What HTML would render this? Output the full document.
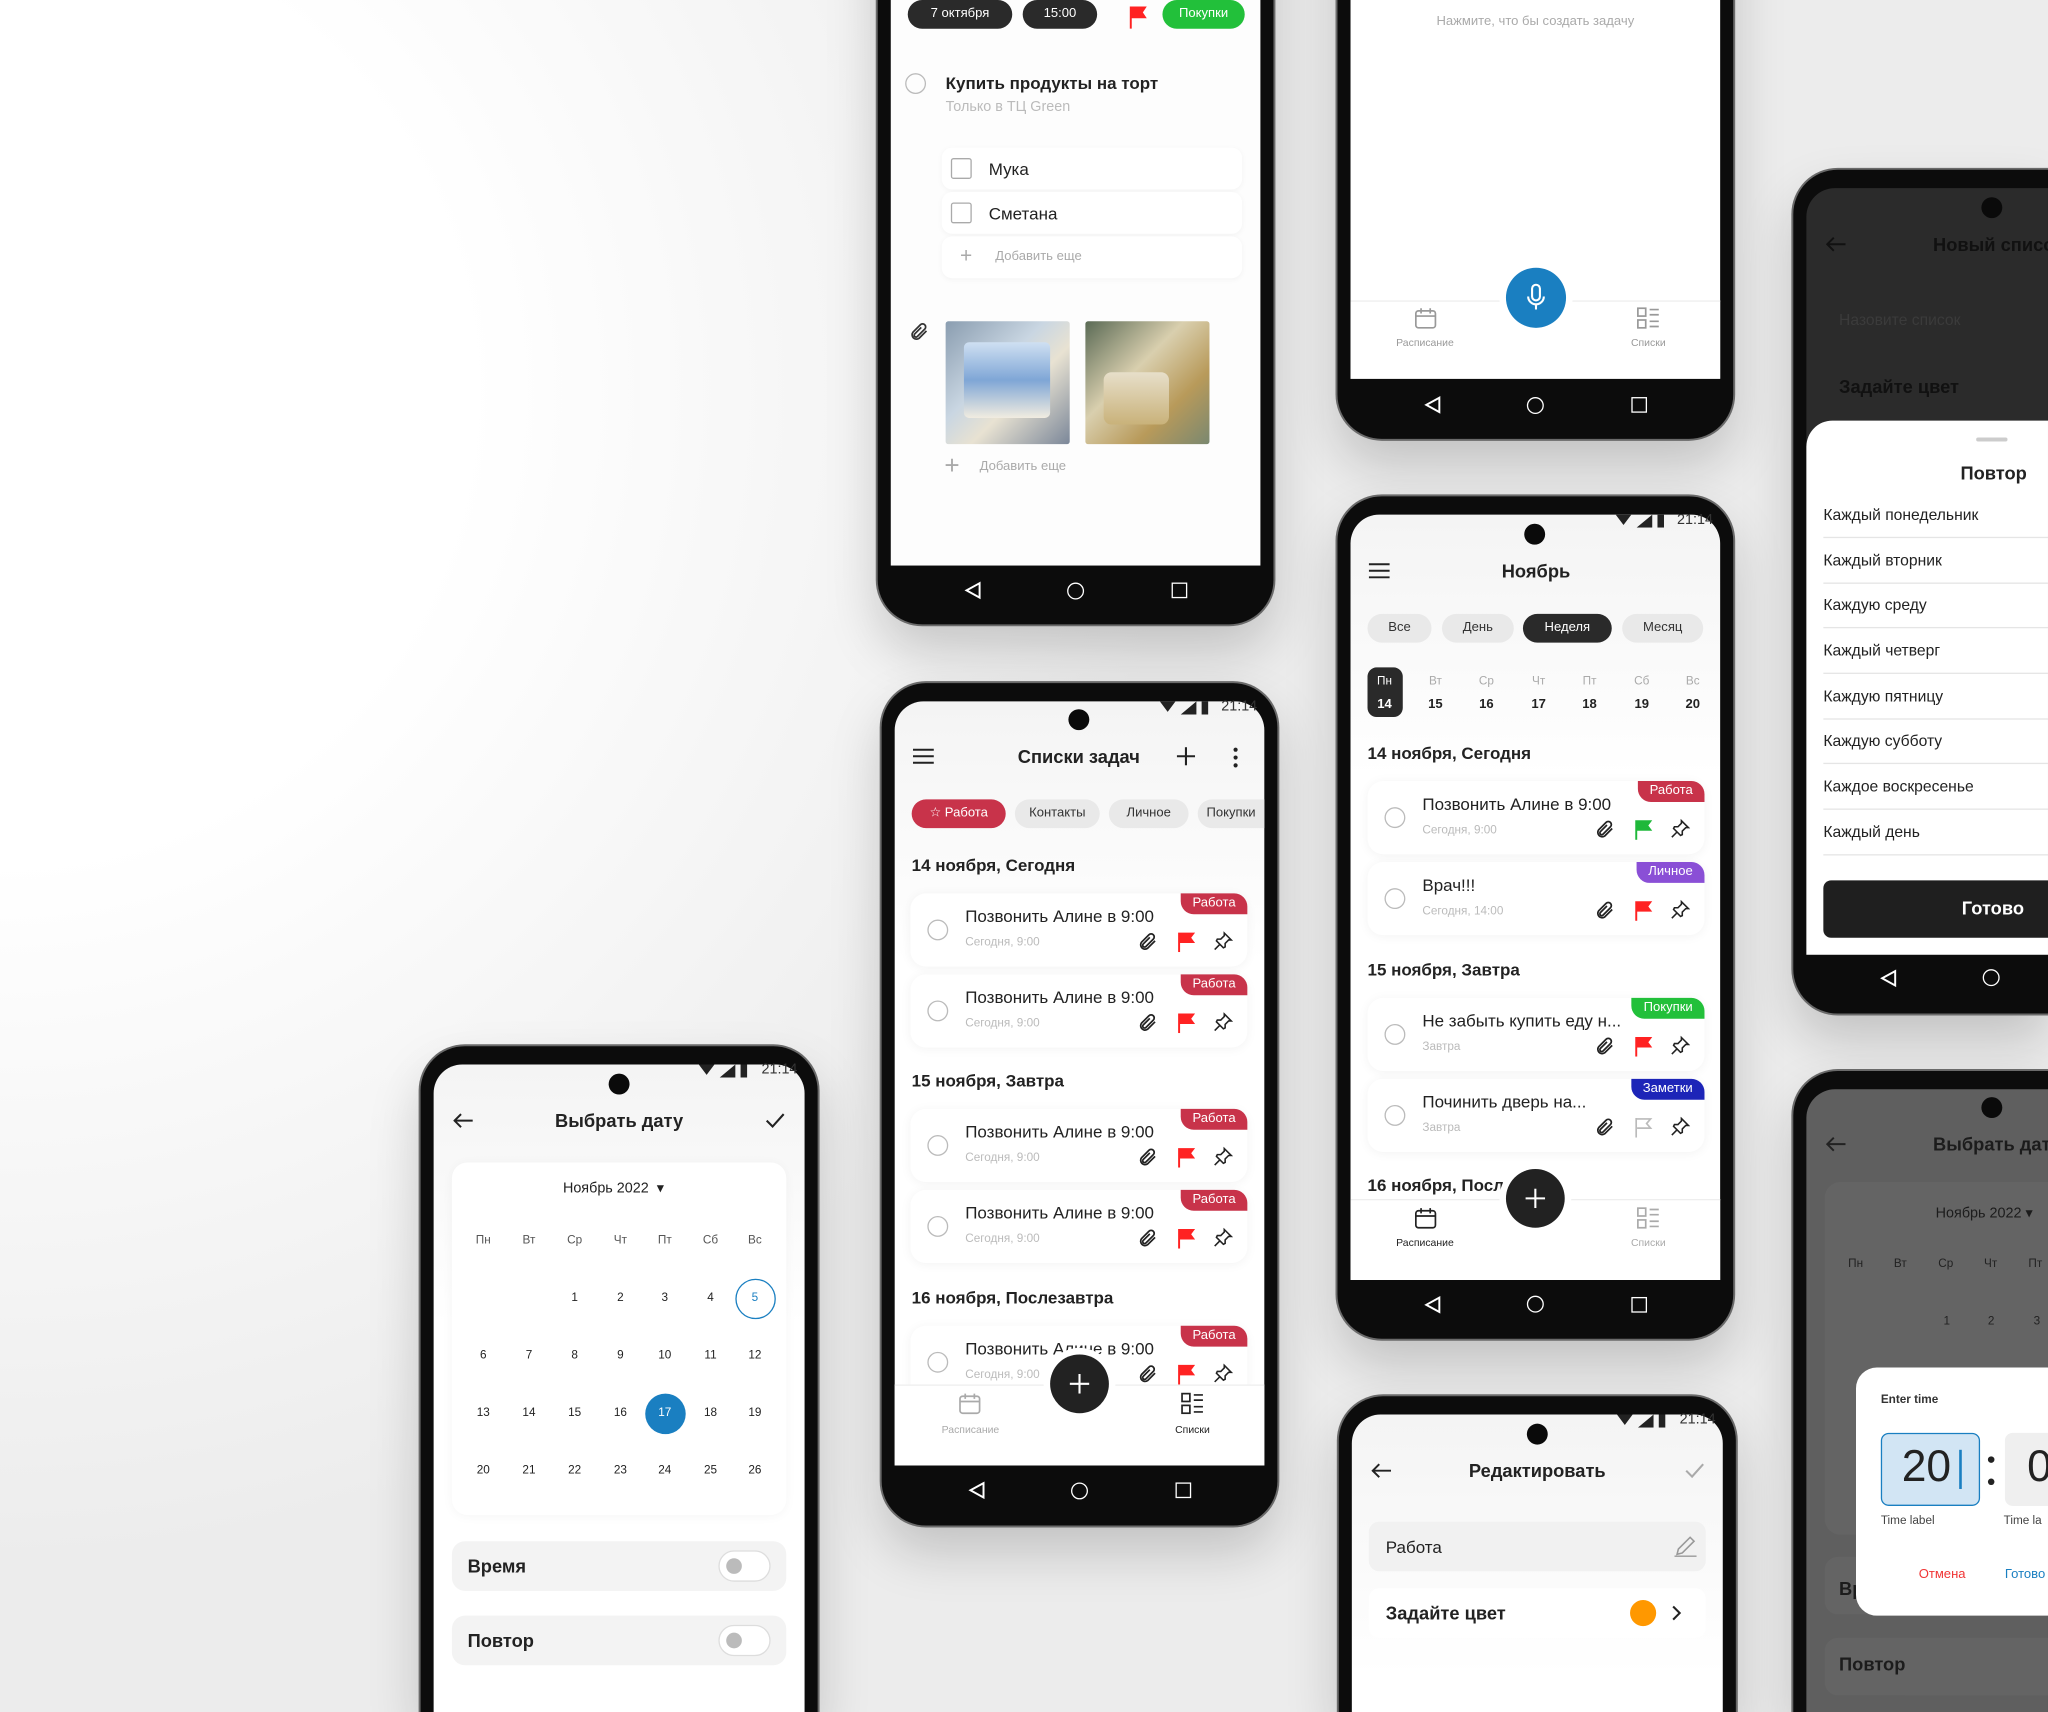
<!DOCTYPE html>
<html style="width:2048px;height:1712px;overflow:hidden"><head><meta charset="utf-8"><style>
*{margin:0;padding:0;box-sizing:border-box}
html,body{width:2048px;height:1712px;overflow:hidden}
body{position:relative;background:#eee;font-family:"Liberation Sans","DejaVu Sans",sans-serif;color:#222}
#w{position:absolute;left:0;top:0;width:1568px;height:1311px;transform:scale(1.30612);transform-origin:0 0;overflow:hidden;background:radial-gradient(ellipse 900px 900px at 0px 300px,#fff 0%,#fff 40%,#ececec 100%)}
#w div,#w span,#w b,#w i,#w svg{position:absolute}
#w span,#w b{white-space:nowrap}
.fr{background:#0c0c0c;border-radius:34px;box-shadow:0 0 0 1.5px #6a6a6a,0 20px 40px rgba(0,0,0,.18)}
.frb{border-radius:34px 34px 0 0}
.sc{background:linear-gradient(#f4f4f4,#fff 200px);border-radius:22px 22px 0 0;overflow:hidden}
.cam{width:16px;height:16px;border-radius:50%;background:#0a0a0a}
.st{font-size:11px;color:#333}
.card{width:258px;height:56px;background:#fff;border-radius:12px;box-shadow:0 1px 8px rgba(0,0,0,.05)}
.rad{left:13px;top:20px;width:16px;height:16px;border:1.3px solid #bbb;border-radius:50%}
.ct{left:42px;top:10px;font-size:13px;font-weight:normal;color:#222}
.cs{left:42px;top:32px;font-size:9px;color:#bbb}
.tag{right:0;top:0;height:16px;padding:0 9px;line-height:16px;font-size:10px;color:#fff;border-radius:0 10px 0 10px}
.ic{top:29px;width:16px;height:16px}
.h{font-size:14px;font-weight:bold;color:#222}
.chip{height:22px;line-height:22px;border-radius:11px;font-size:10px;text-align:center;white-space:nowrap}
.g{background:#e9e9e9;color:#333}
.d{background:#2a2a2a;color:#fff}
.c{text-align:center}
</style></head><body><div id="w">

<!-- Phone 1 top-center -->
<div class="fr" style="left:672px;top:-200px;width:303px;height:678px"></div>
<div class="sc" style="left:682px;top:-190px;width:283px;height:623px;border-radius:0;background:#fdfdfd"></div>
<div class="chip d" style="left:695px;top:0;width:80px">7 октября</div>
<div class="chip d" style="left:783px;top:0;width:57px">15:00</div>
<svg style="left:863px;top:4px" width="16" height="18" viewBox="0 0 16 18"><path d="M2 1h13l-3 4.5 3 4.5H3.5v8H2z" fill="#f22"/></svg>
<div class="chip" style="left:890px;top:0;width:63px;background:#22c03a;color:#fff">Покупки</div>
<div class="rad" style="left:693px;top:56px"></div>
<b class="h" style="left:724px;top:56px;font-size:13px">Купить продукты на торт</b>
<span style="left:724px;top:76px;font-size:11px;color:#bbb">Только в ТЦ Green</span>
<div style="left:721px;top:113px;width:230px;height:32px;background:#fff;border-radius:8px;box-shadow:0 1px 4px rgba(0,0,0,.04)"></div>
<div style="left:721px;top:147px;width:230px;height:32px;background:#fff;border-radius:8px;box-shadow:0 1px 4px rgba(0,0,0,.04)"></div>
<div style="left:721px;top:181px;width:230px;height:32px;background:#fff;border-radius:8px;box-shadow:0 1px 4px rgba(0,0,0,.04)"></div>
<div style="left:728px;top:121px;width:16px;height:16px;border:1.5px solid #aaa;border-radius:2px"></div>
<span style="left:757px;top:122px;font-size:13px">Мука</span>
<div style="left:728px;top:155px;width:16px;height:16px;border:1.5px solid #aaa;border-radius:2px"></div>
<span style="left:757px;top:156px;font-size:13px">Сметана</span>
<span style="left:735px;top:188px;font-size:16px;color:#aaa">+</span>
<span style="left:762px;top:191px;font-size:10px;color:#aaa">Добавить еще</span>
<svg style="left:696px;top:246px" width="16" height="16" viewBox="0 0 24 24"><path d="M20 11l-8.5 8.5a5 5 0 01-7-7L13 4a3.5 3.5 0 015 5l-8.5 8.5a2 2 0 01-3-3L14 7" fill="none" stroke="#333" stroke-width="2"/></svg>
<div style="left:724px;top:246px;width:95px;height:94px;background:linear-gradient(135deg,#8a9db0,#c9d6e2 40%,#e8e2d2 60%,#7b8799);border-radius:2px"></div>
<div style="left:738px;top:262px;width:66px;height:58px;background:linear-gradient(#cfe0f2,#7fa6d6 50%,#f1ece0);border-radius:4px"></div>
<div style="left:831px;top:246px;width:95px;height:94px;background:linear-gradient(135deg,#5a6a55,#d9cfae 40%,#b89a5a 70%,#7a8870);border-radius:2px"></div>
<div style="left:845px;top:285px;width:50px;height:40px;background:linear-gradient(#e7dfca,#c9b27a);border-radius:6px"></div>
<span style="left:723px;top:346px;font-size:20px;color:#aaa;font-weight:lighter">+</span>
<span style="left:750px;top:352px;font-size:10px;color:#aaa">Добавить еще</span>
<svg style="left:738px;top:445px" width="14" height="14" viewBox="0 0 14 14"><path d="M12 1.5L2 7l10 5.5z" fill="none" stroke="#fff" stroke-width="1.5"/></svg>
<div style="left:817px;top:446px;width:13px;height:13px;border:1.5px solid #fff;border-radius:50%"></div>
<div style="left:897px;top:446px;width:12px;height:12px;border:1.5px solid #fff"></div>

<!-- Phone 2 top-right-center -->
<div class="fr" style="left:1024px;top:-300px;width:303px;height:636px"></div>
<div class="sc" style="left:1034px;top:-290px;width:283px;height:580px;border-radius:0;background:#fff"></div>
<span class="c" style="left:1034px;top:11px;width:283px;font-size:10px;color:#aaa">Нажмите, что бы создать задачу</span>
<div style="left:1034px;top:230px;width:283px;height:60px;background:#fff;border-top:1px solid #eee"></div>
<div style="left:1153px;top:205px;width:46px;height:46px;border-radius:50%;background:#1a7fc1;box-shadow:0 0 0 5px #fff"></div>
<svg style="left:1166px;top:217px" width="20" height="22" viewBox="0 0 20 22"><rect x="7" y="1" width="6" height="12" rx="3" fill="none" stroke="#fff" stroke-width="1.6"/><path d="M4 10a6 6 0 0012 0M10 16v4" fill="none" stroke="#fff" stroke-width="1.6"/></svg>
<svg style="left:1083px;top:235px" width="17" height="17" viewBox="0 0 17 17"><rect x="1" y="3" width="15" height="13" rx="2" fill="none" stroke="#999" stroke-width="1.3"/><path d="M1 7h15M5 1v4M12 1v4" stroke="#999" stroke-width="1.3"/></svg>
<span class="c" style="left:1061px;top:258px;width:60px;font-size:8px;color:#999">Расписание</span>
<svg style="left:1253px;top:235px" width="18" height="17" viewBox="0 0 18 17"><rect x="1" y="1" width="6" height="6" fill="none" stroke="#999" stroke-width="1.3"/><rect x="1" y="10" width="6" height="6" fill="none" stroke="#999" stroke-width="1.3"/><path d="M10 2h7M10 6h7M10 11h7M10 15h7" stroke="#999" stroke-width="1.3"/></svg>
<span class="c" style="left:1232px;top:258px;width:60px;font-size:8px;color:#999">Списки</span>
<svg style="left:1090px;top:303px" width="14" height="14" viewBox="0 0 14 14"><path d="M12 1.5L2 7l10 5.5z" fill="none" stroke="#fff" stroke-width="1.5"/></svg>
<div style="left:1169px;top:304px;width:13px;height:13px;border:1.5px solid #fff;border-radius:50%"></div>
<div style="left:1249px;top:304px;width:12px;height:12px;border:1.5px solid #fff"></div>

<!-- Phone 3 middle center -->
<div class="fr" style="left:675px;top:523px;width:303px;height:645px"></div>
<div class="sc" style="left:685px;top:537px;width:283px;height:585px"></div>
<div class="cam" style="left:818px;top:543px"></div>
<span class="st" style="left:935px;top:535px">21:14</span>
<svg style="left:888px;top:537px" width="44" height="10" viewBox="0 0 44 10"><path d="M0 0h12l-6 8z M16 10l12-10v10z M32 0h5v10h-5z" fill="#222"/></svg>
<svg style="left:699px;top:573px" width="16" height="12" viewBox="0 0 16 12"><path d="M0 1h16M0 6h16M0 11h16" stroke="#222" stroke-width="1.5"/></svg>
<b class="h c" style="left:756px;top:571px;width:140px">Списки задач</b>
<svg style="left:901px;top:572px" width="14" height="14" viewBox="0 0 14 14"><path d="M7 0v14M0 7h14" stroke="#222" stroke-width="1.6"/></svg>
<svg style="left:944px;top:572px" width="4" height="16" viewBox="0 0 4 16"><circle cx="2" cy="2" r="1.6" fill="#222"/><circle cx="2" cy="8" r="1.6" fill="#222"/><circle cx="2" cy="14" r="1.6" fill="#222"/></svg>
<div class="chip" style="left:698px;top:612px;width:72px;background:#c8334a;color:#fff">&#x2606; Работа</div>
<div class="chip g" style="left:777px;top:612px;width:65px">Контакты</div>
<div class="chip g" style="left:849px;top:612px;width:61px">Личное</div>
<div class="chip g" style="left:917px;top:612px;width:51px;border-radius:11px 0 0 11px;overflow:hidden">Покупки</div>
<b class="h" style="left:698px;top:655px;font-size:13px">14 ноября, Сегодня</b>
<b class="h" style="left:698px;top:820px;font-size:13px">15 ноября, Завтра</b>
<b class="h" style="left:698px;top:986px;font-size:13px">16 ноября, Послезавтра</b>

<div class="card" style="left:697px;top:684px"><i class="rad"></i><span class="ct">Позвонить Алине в 9:00</span><span class="cs">Сегодня, 9:00</span><span class="tag" style="background:#c8334a">Работа</span>
<svg class="ic" style="left:174px" viewBox="0 0 24 24"><path d="M20 11l-8.5 8.5a5 5 0 01-7-7L13 4a3.5 3.5 0 015 5l-8.5 8.5a2 2 0 01-3-3L14 7" fill="none" stroke="#222" stroke-width="2"/></svg>
<svg class="ic" style="left:203px" viewBox="0 0 16 16"><path d="M2 1h13l-3 4 3 4H3.5v7H2z" fill="#f22"/></svg>
<svg class="ic" style="left:231px" viewBox="0 0 24 24"><path d="M14 2l8 8-3 0-4 4 0 4-2 1-8-8 1-2 4 0 4-4z M9 15l-6 6" fill="none" stroke="#222" stroke-width="1.8"/></svg></div>
<div class="card" style="left:697px;top:746px"><i class="rad"></i><span class="ct">Позвонить Алине в 9:00</span><span class="cs">Сегодня, 9:00</span><span class="tag" style="background:#c8334a">Работа</span>
<svg class="ic" style="left:174px" viewBox="0 0 24 24"><path d="M20 11l-8.5 8.5a5 5 0 01-7-7L13 4a3.5 3.5 0 015 5l-8.5 8.5a2 2 0 01-3-3L14 7" fill="none" stroke="#222" stroke-width="2"/></svg>
<svg class="ic" style="left:203px" viewBox="0 0 16 16"><path d="M2 1h13l-3 4 3 4H3.5v7H2z" fill="#f22"/></svg>
<svg class="ic" style="left:231px" viewBox="0 0 24 24"><path d="M14 2l8 8-3 0-4 4 0 4-2 1-8-8 1-2 4 0 4-4z M9 15l-6 6" fill="none" stroke="#222" stroke-width="1.8"/></svg></div>
<div class="card" style="left:697px;top:849px"><i class="rad"></i><span class="ct">Позвонить Алине в 9:00</span><span class="cs">Сегодня, 9:00</span><span class="tag" style="background:#c8334a">Работа</span>
<svg class="ic" style="left:174px" viewBox="0 0 24 24"><path d="M20 11l-8.5 8.5a5 5 0 01-7-7L13 4a3.5 3.5 0 015 5l-8.5 8.5a2 2 0 01-3-3L14 7" fill="none" stroke="#222" stroke-width="2"/></svg>
<svg class="ic" style="left:203px" viewBox="0 0 16 16"><path d="M2 1h13l-3 4 3 4H3.5v7H2z" fill="#f22"/></svg>
<svg class="ic" style="left:231px" viewBox="0 0 24 24"><path d="M14 2l8 8-3 0-4 4 0 4-2 1-8-8 1-2 4 0 4-4z M9 15l-6 6" fill="none" stroke="#222" stroke-width="1.8"/></svg></div>
<div class="card" style="left:697px;top:911px"><i class="rad"></i><span class="ct">Позвонить Алине в 9:00</span><span class="cs">Сегодня, 9:00</span><span class="tag" style="background:#c8334a">Работа</span>
<svg class="ic" style="left:174px" viewBox="0 0 24 24"><path d="M20 11l-8.5 8.5a5 5 0 01-7-7L13 4a3.5 3.5 0 015 5l-8.5 8.5a2 2 0 01-3-3L14 7" fill="none" stroke="#222" stroke-width="2"/></svg>
<svg class="ic" style="left:203px" viewBox="0 0 16 16"><path d="M2 1h13l-3 4 3 4H3.5v7H2z" fill="#f22"/></svg>
<svg class="ic" style="left:231px" viewBox="0 0 24 24"><path d="M14 2l8 8-3 0-4 4 0 4-2 1-8-8 1-2 4 0 4-4z M9 15l-6 6" fill="none" stroke="#222" stroke-width="1.8"/></svg></div>
<div class="card" style="left:697px;top:1015px"><i class="rad"></i><span class="ct">Позвонить Алине в 9:00</span><span class="cs">Сегодня, 9:00</span><span class="tag" style="background:#c8334a">Работа</span>
<svg class="ic" style="left:174px" viewBox="0 0 24 24"><path d="M20 11l-8.5 8.5a5 5 0 01-7-7L13 4a3.5 3.5 0 015 5l-8.5 8.5a2 2 0 01-3-3L14 7" fill="none" stroke="#222" stroke-width="2"/></svg>
<svg class="ic" style="left:203px" viewBox="0 0 16 16"><path d="M2 1h13l-3 4 3 4H3.5v7H2z" fill="#f22"/></svg>
<svg class="ic" style="left:231px" viewBox="0 0 24 24"><path d="M14 2l8 8-3 0-4 4 0 4-2 1-8-8 1-2 4 0 4-4z M9 15l-6 6" fill="none" stroke="#222" stroke-width="1.8"/></svg></div>
<div style="left:685px;top:1060px;width:283px;height:62px;background:#fff;border-top:1px solid #eee"></div>
<div style="left:804px;top:1037px;width:45px;height:45px;border-radius:50%;background:#222;box-shadow:0 0 0 5px #fff"></div>
<svg style="left:819px;top:1052px" width="15" height="15" viewBox="0 0 15 15"><path d="M7.5 0v15M0 7.5h15" stroke="#fff" stroke-width="1.6"/></svg>
<svg style="left:734px;top:1066px" width="17" height="17" viewBox="0 0 17 17"><rect x="1" y="3" width="15" height="13" rx="2" fill="none" stroke="#aaa" stroke-width="1.3"/><path d="M1 7h15M5 1v4M12 1v4" stroke="#aaa" stroke-width="1.3"/></svg>
<span class="c" style="left:713px;top:1090px;width:60px;font-size:8px;color:#aaa">Расписание</span>
<svg style="left:904px;top:1066px" width="18" height="17" viewBox="0 0 18 17"><rect x="1" y="1" width="6" height="6" fill="none" stroke="#222" stroke-width="1.3"/><rect x="1" y="10" width="6" height="6" fill="none" stroke="#222" stroke-width="1.3"/><path d="M10 2h7M10 6h7M10 11h7M10 15h7" stroke="#222" stroke-width="1.3"/></svg>
<span class="c" style="left:883px;top:1090px;width:60px;font-size:8px;color:#222">Списки</span>
<svg style="left:741px;top:1134px" width="14" height="14" viewBox="0 0 14 14"><path d="M12 1.5L2 7l10 5.5z" fill="none" stroke="#fff" stroke-width="1.5"/></svg>
<div style="left:820px;top:1135px;width:13px;height:13px;border:1.5px solid #fff;border-radius:50%"></div>
<div style="left:900px;top:1135px;width:12px;height:12px;border:1.5px solid #fff"></div>

<!-- Phone 4 right center -->
<div class="fr" style="left:1024px;top:380px;width:303px;height:645px"></div>
<div class="sc" style="left:1034px;top:394px;width:283px;height:586px"></div>
<div class="cam" style="left:1167px;top:401px"></div>
<span class="st" style="left:1284px;top:392px">21:14</span>
<svg style="left:1237px;top:394px" width="44" height="10" viewBox="0 0 44 10"><path d="M0 0h12l-6 8z M16 10l12-10v10z M32 0h5v10h-5z" fill="#222"/></svg>
<svg style="left:1048px;top:431px" width="16" height="12" viewBox="0 0 16 12"><path d="M0 1h16M0 6h16M0 11h16" stroke="#222" stroke-width="1.5"/></svg>
<b class="h c" style="left:1106px;top:429px;width:140px">Ноябрь</b>
<div class="chip g" style="left:1047px;top:470px;width:49px">Все</div>
<div class="chip g" style="left:1104px;top:470px;width:55px">День</div>
<div class="chip d" style="left:1166px;top:470px;width:68px">Неделя</div>
<div class="chip g" style="left:1242px;top:470px;width:62px">Месяц</div>
<div style="left:1047px;top:511px;width:27px;height:38px;background:#2a2a2a;border-radius:7px"></div>
<span class="c" style="left:1045px;top:516px;width:30px;font-size:9px;color:#fff">Пн</span><b class="c" style="left:1045px;top:534px;width:30px;font-size:10px;color:#fff">14</b>
<span class="c" style="left:1084px;top:516px;width:30px;font-size:9px;color:#aaa">Вт</span><b class="c" style="left:1084px;top:534px;width:30px;font-size:10px">15</b>
<span class="c" style="left:1123px;top:516px;width:30px;font-size:9px;color:#aaa">Ср</span><b class="c" style="left:1123px;top:534px;width:30px;font-size:10px">16</b>
<span class="c" style="left:1163px;top:516px;width:30px;font-size:9px;color:#aaa">Чт</span><b class="c" style="left:1163px;top:534px;width:30px;font-size:10px">17</b>
<span class="c" style="left:1202px;top:516px;width:30px;font-size:9px;color:#aaa">Пт</span><b class="c" style="left:1202px;top:534px;width:30px;font-size:10px">18</b>
<span class="c" style="left:1242px;top:516px;width:30px;font-size:9px;color:#aaa">Сб</span><b class="c" style="left:1242px;top:534px;width:30px;font-size:10px">19</b>
<span class="c" style="left:1281px;top:516px;width:30px;font-size:9px;color:#aaa">Вс</span><b class="c" style="left:1281px;top:534px;width:30px;font-size:10px">20</b>
<b class="h" style="left:1047px;top:569px;font-size:13px">14 ноября, Сегодня</b>
<b class="h" style="left:1047px;top:735px;font-size:13px">15 ноября, Завтра</b>
<b class="h" style="left:1047px;top:900px;font-size:13px">16 ноября, Послезавтра</b>
<div class="card" style="left:1047px;top:598px"><i class="rad"></i><span class="ct">Позвонить Алине в 9:00</span><span class="cs">Сегодня, 9:00</span><span class="tag" style="background:#c8334a">Работа</span>
<svg class="ic" style="left:174px" viewBox="0 0 24 24"><path d="M20 11l-8.5 8.5a5 5 0 01-7-7L13 4a3.5 3.5 0 015 5l-8.5 8.5a2 2 0 01-3-3L14 7" fill="none" stroke="#222" stroke-width="2"/></svg>
<svg class="ic" style="left:203px" viewBox="0 0 16 16"><path d="M2 1h13l-3 4 3 4H3.5v7H2z" fill="#1fb83a"/></svg>
<svg class="ic" style="left:231px" viewBox="0 0 24 24"><path d="M14 2l8 8-3 0-4 4 0 4-2 1-8-8 1-2 4 0 4-4z M9 15l-6 6" fill="none" stroke="#222" stroke-width="1.8"/></svg></div>
<div class="card" style="left:1047px;top:660px"><i class="rad"></i><span class="ct">Врач!!!</span><span class="cs">Сегодня, 14:00</span><span class="tag" style="background:#8a4fd6">Личное</span>
<svg class="ic" style="left:174px" viewBox="0 0 24 24"><path d="M20 11l-8.5 8.5a5 5 0 01-7-7L13 4a3.5 3.5 0 015 5l-8.5 8.5a2 2 0 01-3-3L14 7" fill="none" stroke="#222" stroke-width="2"/></svg>
<svg class="ic" style="left:203px" viewBox="0 0 16 16"><path d="M2 1h13l-3 4 3 4H3.5v7H2z" fill="#f22"/></svg>
<svg class="ic" style="left:231px" viewBox="0 0 24 24"><path d="M14 2l8 8-3 0-4 4 0 4-2 1-8-8 1-2 4 0 4-4z M9 15l-6 6" fill="none" stroke="#222" stroke-width="1.8"/></svg></div>
<div class="card" style="left:1047px;top:764px"><i class="rad"></i><span class="ct">Не забыть купить еду н...</span><span class="cs">Завтра</span><span class="tag" style="background:#22c03a">Покупки</span>
<svg class="ic" style="left:174px" viewBox="0 0 24 24"><path d="M20 11l-8.5 8.5a5 5 0 01-7-7L13 4a3.5 3.5 0 015 5l-8.5 8.5a2 2 0 01-3-3L14 7" fill="none" stroke="#222" stroke-width="2"/></svg>
<svg class="ic" style="left:203px" viewBox="0 0 16 16"><path d="M2 1h13l-3 4 3 4H3.5v7H2z" fill="#f22"/></svg>
<svg class="ic" style="left:231px" viewBox="0 0 24 24"><path d="M14 2l8 8-3 0-4 4 0 4-2 1-8-8 1-2 4 0 4-4z M9 15l-6 6" fill="none" stroke="#222" stroke-width="1.8"/></svg></div>
<div class="card" style="left:1047px;top:826px"><i class="rad"></i><span class="ct">Починить дверь на...</span><span class="cs">Завтра</span><span class="tag" style="background:#1d25b8">Заметки</span>
<svg class="ic" style="left:174px" viewBox="0 0 24 24"><path d="M20 11l-8.5 8.5a5 5 0 01-7-7L13 4a3.5 3.5 0 015 5l-8.5 8.5a2 2 0 01-3-3L14 7" fill="none" stroke="#222" stroke-width="2"/></svg>
<svg class="ic" style="left:203px" viewBox="0 0 16 16"><path d="M2.7 1.7h11l-3 3.5 3 3.5H3.4M2.7 1v15" fill="none" stroke="#bbb" stroke-width="1.3"/></svg>
<svg class="ic" style="left:231px" viewBox="0 0 24 24"><path d="M14 2l8 8-3 0-4 4 0 4-2 1-8-8 1-2 4 0 4-4z M9 15l-6 6" fill="none" stroke="#222" stroke-width="1.8"/></svg></div>
<div style="left:1034px;top:918px;width:283px;height:62px;background:#fff;border-top:1px solid #eee"></div>
<div style="left:1153px;top:895px;width:45px;height:45px;border-radius:50%;background:#222;box-shadow:0 0 0 5px #fff"></div>
<svg style="left:1168px;top:910px" width="15" height="15" viewBox="0 0 15 15"><path d="M7.5 0v15M0 7.5h15" stroke="#fff" stroke-width="1.6"/></svg>
<svg style="left:1083px;top:924px" width="17" height="17" viewBox="0 0 17 17"><rect x="1" y="3" width="15" height="13" rx="2" fill="none" stroke="#222" stroke-width="1.3"/><path d="M1 7h15M5 1v4M12 1v4" stroke="#222" stroke-width="1.3"/></svg>
<span class="c" style="left:1061px;top:947px;width:60px;font-size:8px;color:#222">Расписание</span>
<svg style="left:1253px;top:924px" width="18" height="17" viewBox="0 0 18 17"><rect x="1" y="1" width="6" height="6" fill="none" stroke="#aaa" stroke-width="1.3"/><rect x="1" y="10" width="6" height="6" fill="none" stroke="#aaa" stroke-width="1.3"/><path d="M10 2h7M10 6h7M10 11h7M10 15h7" stroke="#aaa" stroke-width="1.3"/></svg>
<span class="c" style="left:1232px;top:947px;width:60px;font-size:8px;color:#aaa">Списки</span>
<svg style="left:1090px;top:992px" width="14" height="14" viewBox="0 0 14 14"><path d="M12 1.5L2 7l10 5.5z" fill="none" stroke="#fff" stroke-width="1.5"/></svg>
<div style="left:1169px;top:992px;width:13px;height:13px;border:1.5px solid #fff;border-radius:50%"></div>
<div style="left:1249px;top:993px;width:12px;height:12px;border:1.5px solid #fff"></div>

<!-- Phone 5 left -->
<div class="fr frb" style="left:322px;top:801px;width:304px;height:510px"></div>
<div class="sc" style="left:332px;top:815px;width:284px;height:496px"></div>
<div class="cam" style="left:466px;top:822px"></div>
<span class="st" style="left:583px;top:813px">21:14</span>
<svg style="left:535px;top:815px" width="44" height="10" viewBox="0 0 44 10"><path d="M0 0h12l-6 8z M16 10l12-10v10z M32 0h5v10h-5z" fill="#222"/></svg>
<svg style="left:347px;top:852px" width="15" height="12" viewBox="0 0 15 12"><path d="M15 6H1M6 1L1 6l5 5" fill="none" stroke="#222" stroke-width="1.5"/></svg>
<b class="h c" style="left:404px;top:850px;width:140px">Выбрать дату</b>
<svg style="left:586px;top:852px" width="15" height="12" viewBox="0 0 15 12"><path d="M1 6l4.5 4.5L14 1" fill="none" stroke="#222" stroke-width="1.6"/></svg>
<div style="left:346px;top:890px;width:256px;height:270px;background:#fff;border-radius:12px;box-shadow:0 1px 8px rgba(0,0,0,.04)"></div>
<span style="left:431px;top:903px;font-size:11px;color:#222">Ноябрь 2022 &nbsp;▾</span>
<span class="c" style="left:355px;top:944px;width:30px;font-size:9px;color:#555">Пн</span>
<span class="c" style="left:390px;top:944px;width:30px;font-size:9px;color:#555">Вт</span>
<span class="c" style="left:425px;top:944px;width:30px;font-size:9px;color:#555">Ср</span>
<span class="c" style="left:460px;top:944px;width:30px;font-size:9px;color:#555">Чт</span>
<span class="c" style="left:494px;top:944px;width:30px;font-size:9px;color:#555">Пт</span>
<span class="c" style="left:529px;top:944px;width:30px;font-size:9px;color:#555">Сб</span>
<span class="c" style="left:563px;top:944px;width:30px;font-size:9px;color:#555">Вс</span>
<div style="left:563px;top:979px;width:31px;height:31px;border:1px solid #1a7fc1;border-radius:50%"></div>
<div style="left:494px;top:1067px;width:31px;height:31px;background:#1a7fc1;border-radius:50%"></div>
<span class="c" style="left:425px;top:988px;width:30px;font-size:9px">1</span><span class="c" style="left:460px;top:988px;width:30px;font-size:9px">2</span><span class="c" style="left:494px;top:988px;width:30px;font-size:9px">3</span><span class="c" style="left:529px;top:988px;width:30px;font-size:9px">4</span><span class="c" style="left:563px;top:988px;width:30px;font-size:9px;color:#1a7fc1">5</span>
<span class="c" style="left:355px;top:1032px;width:30px;font-size:9px">6</span><span class="c" style="left:390px;top:1032px;width:30px;font-size:9px">7</span><span class="c" style="left:425px;top:1032px;width:30px;font-size:9px">8</span><span class="c" style="left:460px;top:1032px;width:30px;font-size:9px">9</span><span class="c" style="left:494px;top:1032px;width:30px;font-size:9px">10</span><span class="c" style="left:529px;top:1032px;width:30px;font-size:9px">11</span><span class="c" style="left:563px;top:1032px;width:30px;font-size:9px">12</span>
<span class="c" style="left:355px;top:1076px;width:30px;font-size:9px">13</span><span class="c" style="left:390px;top:1076px;width:30px;font-size:9px">14</span><span class="c" style="left:425px;top:1076px;width:30px;font-size:9px">15</span><span class="c" style="left:460px;top:1076px;width:30px;font-size:9px">16</span><span class="c" style="left:494px;top:1076px;width:30px;font-size:9px;color:#fff">17</span><span class="c" style="left:529px;top:1076px;width:30px;font-size:9px">18</span><span class="c" style="left:563px;top:1076px;width:30px;font-size:9px">19</span>
<span class="c" style="left:355px;top:1120px;width:30px;font-size:9px">20</span><span class="c" style="left:390px;top:1120px;width:30px;font-size:9px">21</span><span class="c" style="left:425px;top:1120px;width:30px;font-size:9px">22</span><span class="c" style="left:460px;top:1120px;width:30px;font-size:9px">23</span><span class="c" style="left:494px;top:1120px;width:30px;font-size:9px">24</span><span class="c" style="left:529px;top:1120px;width:30px;font-size:9px">25</span><span class="c" style="left:563px;top:1120px;width:30px;font-size:9px">26</span>
<div style="left:346px;top:1180px;width:256px;height:38px;background:#f3f3f3;border-radius:10px"></div>
<b class="h" style="left:358px;top:1191px">Время</b>
<div style="left:550px;top:1187px;width:40px;height:24px;border:1.5px solid #ddd;border-radius:12px;background:#fff"></div><div style="left:556px;top:1193px;width:12px;height:12px;border-radius:50%;background:#bbb"></div>
<div style="left:346px;top:1237px;width:256px;height:38px;background:#f3f3f3;border-radius:10px"></div>
<b class="h" style="left:358px;top:1248px">Повтор</b>
<div style="left:550px;top:1244px;width:40px;height:24px;border:1.5px solid #ddd;border-radius:12px;background:#fff"></div><div style="left:556px;top:1250px;width:12px;height:12px;border-radius:50%;background:#bbb"></div>

<!-- Phone 6 bottom center -->
<div class="fr frb" style="left:1025px;top:1069px;width:304px;height:242px"></div>
<div class="sc" style="left:1035px;top:1083px;width:284px;height:228px"></div>
<div class="cam" style="left:1169px;top:1090px"></div>
<span class="st" style="left:1286px;top:1081px">21:14</span>
<svg style="left:1238px;top:1083px" width="44" height="10" viewBox="0 0 44 10"><path d="M0 0h12l-6 8z M16 10l12-10v10z M32 0h5v10h-5z" fill="#222"/></svg>
<svg style="left:1050px;top:1120px" width="15" height="12" viewBox="0 0 15 12"><path d="M15 6H1M6 1L1 6l5 5" fill="none" stroke="#222" stroke-width="1.5"/></svg>
<b class="h c" style="left:1107px;top:1118px;width:140px">Редактировать</b>
<svg style="left:1290px;top:1120px" width="15" height="12" viewBox="0 0 15 12"><path d="M1 6l4.5 4.5L14 1" fill="none" stroke="#aaa" stroke-width="1.6"/></svg>
<div style="left:1048px;top:1165px;width:258px;height:38px;background:#f1f1f1;border-radius:8px"></div>
<span style="left:1061px;top:1177px;font-size:13px">Работа</span>
<svg style="left:1282px;top:1175px" width="17" height="17" viewBox="0 0 17 17"><path d="M2 15l1-4 9-9 3 3-9 9zM0 16.5h17" fill="none" stroke="#999" stroke-width="1.2"/></svg>
<div style="left:1048px;top:1216px;width:258px;height:38px;background:#fff;border-radius:8px"></div>
<b class="h" style="left:1061px;top:1227px">Задайте цвет</b>
<div style="left:1248px;top:1225px;width:20px;height:20px;border-radius:50%;background:#ff9800"></div>
<svg style="left:1280px;top:1229px" width="8" height="12" viewBox="0 0 8 12"><path d="M1 1l5 5-5 5" fill="none" stroke="#222" stroke-width="1.6"/></svg>

<!-- Phone 7 right top -->
<div class="fr" style="left:1373px;top:130px;width:195px;height:646px;border-radius:34px 0 0 34px"></div>
<div class="sc" style="left:1383px;top:144px;width:185px;height:587px;background:#2b2b2b;border-radius:22px 0 0 0"></div>
<div class="cam" style="left:1517px;top:151px"></div>
<svg style="left:1398px;top:181px" width="15" height="12" viewBox="0 0 15 12"><path d="M15 6H1M6 1L1 6l5 5" fill="none" stroke="#111" stroke-width="1.5"/></svg>
<b class="h" style="left:1480px;top:179px;color:#111">Новый список</b>
<span style="left:1408px;top:238px;font-size:12px;color:#3b3b3b">Назовите список</span>
<b class="h" style="left:1408px;top:288px;color:#111">Задайте цвет</b>
<div style="left:1383px;top:322px;width:185px;height:409px;background:#fff;border-radius:20px 0 0 0"></div>
<div style="left:1513px;top:335px;width:24px;height:3px;background:#ccc;border-radius:2px"></div>
<b class="h" style="left:1501px;top:354px">Повтор</b>
<span style="left:1396px;top:387px;font-size:12px">Каждый понедельник</span><div style="left:1396px;top:411px;width:172px;height:1px;background:#e5e5e5"></div>
<span style="left:1396px;top:422px;font-size:12px">Каждый вторник</span><div style="left:1396px;top:446px;width:172px;height:1px;background:#e5e5e5"></div>
<span style="left:1396px;top:456px;font-size:12px">Каждую среду</span><div style="left:1396px;top:480px;width:172px;height:1px;background:#e5e5e5"></div>
<span style="left:1396px;top:491px;font-size:12px">Каждый четверг</span><div style="left:1396px;top:515px;width:172px;height:1px;background:#e5e5e5"></div>
<span style="left:1396px;top:526px;font-size:12px">Каждую пятницу</span><div style="left:1396px;top:550px;width:172px;height:1px;background:#e5e5e5"></div>
<span style="left:1396px;top:560px;font-size:12px">Каждую субботу</span><div style="left:1396px;top:584px;width:172px;height:1px;background:#e5e5e5"></div>
<span style="left:1396px;top:595px;font-size:12px">Каждое воскресенье</span><div style="left:1396px;top:619px;width:172px;height:1px;background:#e5e5e5"></div>
<span style="left:1396px;top:630px;font-size:12px">Каждый день</span><div style="left:1396px;top:654px;width:172px;height:1px;background:#e5e5e5"></div>
<div style="left:1396px;top:674px;width:172px;height:44px;background:#1f1f1f;border-radius:6px 0 0 6px"></div>
<b class="h" style="left:1502px;top:687px;color:#fff">Готово</b>
<svg style="left:1439px;top:742px" width="14" height="14" viewBox="0 0 14 14"><path d="M12 1.5L2 7l10 5.5z" fill="none" stroke="#fff" stroke-width="1.5"/></svg>
<div style="left:1518px;top:742px;width:13px;height:13px;border:1.5px solid #fff;border-radius:50%"></div>

<!-- Phone 8 right bottom -->
<div class="fr" style="left:1373px;top:820px;width:195px;height:491px;border-radius:34px 0 0 0"></div>
<div class="sc" style="left:1383px;top:834px;width:185px;height:477px;background:#5f5f5f;border-radius:22px 0 0 0"></div>
<div class="cam" style="left:1517px;top:840px"></div>
<svg style="left:1398px;top:870px" width="15" height="12" viewBox="0 0 15 12"><path d="M15 6H1M6 1L1 6l5 5" fill="none" stroke="#222" stroke-width="1.5"/></svg>
<b class="h" style="left:1480px;top:868px;color:#1c1c1c">Выбрать дату</b>
<div style="left:1397px;top:905px;width:171px;height:270px;background:#646464;border-radius:12px 0 0 12px"></div>
<span style="left:1482px;top:922px;font-size:11px;color:#1c1c1c">Ноябрь 2022 ▾</span>
<span style="left:1415px;top:962px;font-size:9px;color:#222">Пн</span><span style="left:1450px;top:962px;font-size:9px;color:#222">Вт</span><span style="left:1484px;top:962px;font-size:9px;color:#222">Ср</span><span style="left:1519px;top:962px;font-size:9px;color:#222">Чт</span><span style="left:1553px;top:962px;font-size:9px;color:#222">Пт</span>
<span style="left:1488px;top:1006px;font-size:9px;color:#222">1</span><span style="left:1522px;top:1006px;font-size:9px;color:#222">2</span><span style="left:1557px;top:1006px;font-size:9px;color:#222">3</span>
<div style="left:1397px;top:1192px;width:171px;height:44px;background:#646464;border-radius:10px 0 0 10px"></div>
<b class="h" style="left:1408px;top:1208px;color:#1c1c1c">Вр</b>
<div style="left:1397px;top:1254px;width:171px;height:44px;background:#646464;border-radius:10px 0 0 10px"></div>
<b class="h" style="left:1408px;top:1266px;color:#1c1c1c">Повтор</b>
<div style="left:1421px;top:1047px;width:147px;height:190px;background:#fff;border-radius:16px 0 0 16px;overflow:hidden"></div>
<b style="left:1440px;top:1066px;font-size:9px;color:#333">Enter time</b>
<div style="left:1440px;top:1097px;width:76px;height:56px;background:#d2e5f4;border:1.5px solid #1a7fc1;border-radius:6px"></div>
<span style="left:1456px;top:1104px;font-size:34px;color:#222">20</span>
<div style="left:1500px;top:1110px;width:1.5px;height:30px;background:#1a7fc1"></div>
<div style="left:1522px;top:1115px;width:5px;height:5px;border-radius:50%;background:#222"></div>
<div style="left:1522px;top:1132px;width:5px;height:5px;border-radius:50%;background:#222"></div>
<div style="left:1535px;top:1097px;width:33px;height:56px;background:#efefef;border-radius:6px 0 0 6px"></div>
<span style="left:1552px;top:1104px;font-size:34px;color:#222">0</span>
<span style="left:1440px;top:1159px;font-size:9px;color:#444">Time label</span>
<span style="left:1534px;top:1159px;font-size:9px;color:#444">Time la</span>
<span style="left:1469px;top:1200px;font-size:10px;color:#f03535">Отмена</span>
<span style="left:1535px;top:1200px;font-size:10px;color:#1a7fc1">Готово</span>

</div></body></html>
